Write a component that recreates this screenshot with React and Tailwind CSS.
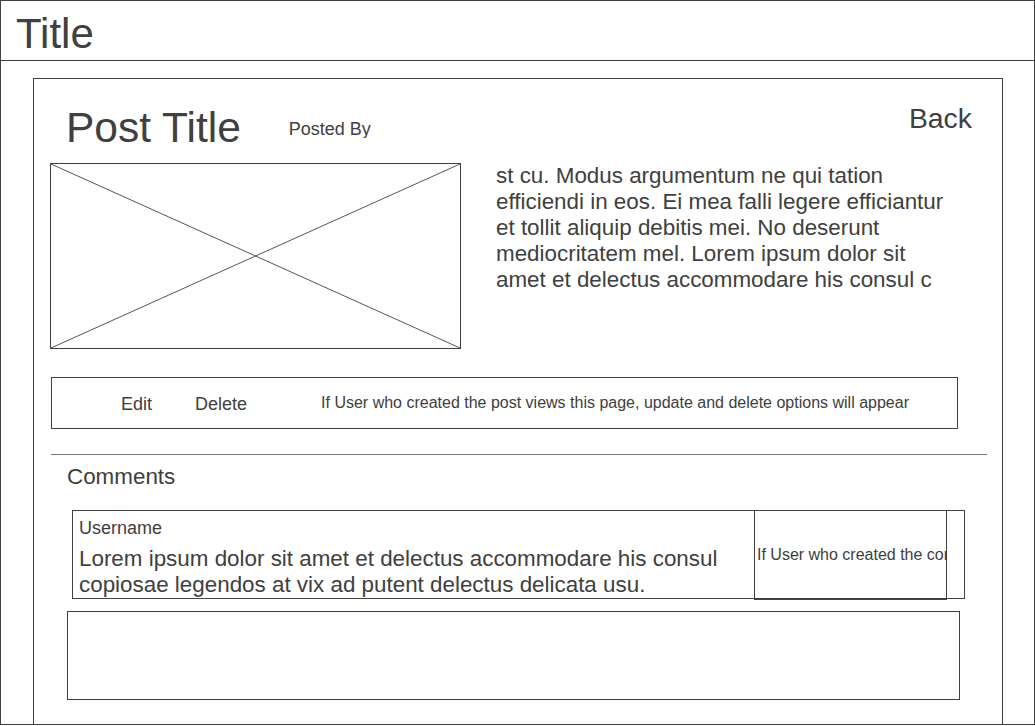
export default function App() {
    return (
        <div className="w-[1035px] h-[725px] border border-[#404040] overflow-hidden bg-white text-[#404040] font-['Liberation_Sans',Arial,sans-serif]">
            {/* Page header */}
            <div className="h-[60px] border-b border-[#404040] pl-[15px] pt-[8px]">
                <h1 className="text-[42px] leading-[1.2]">Title</h1>
            </div>

            <div className="pl-[32px] pt-[17px]">
                <div className="w-[970px] border border-[#404040] pb-[60px]">
                    {/* Post heading */}
                    <div className="flex items-start pt-[22px] pr-[30px]">
                        <h2 className="ml-[32px] mt-[1px] text-[42.5px] leading-[1.2] whitespace-nowrap">Post Title</h2>
                        <div className="ml-[48px] mt-[18px] h-[19px] overflow-hidden text-[18px] leading-[1.2] whitespace-nowrap">Posted By</div>
                        <button className="ml-auto text-[28.4px] leading-[1.2]">Back</button>
                    </div>

                    {/* Image + body */}
                    <div className="flex items-start mt-[10px] ml-[16px]">
                        <div className="relative w-[411px] h-[186px] border border-[#404040] shrink-0">
                            <svg className="absolute inset-0 w-full h-full" viewBox="0 0 409 184" preserveAspectRatio="none">
                                <line x1="0" y1="0" x2="409" y2="184" stroke="#555" strokeWidth="1" />
                                <line x1="0" y1="184" x2="409" y2="0" stroke="#555" strokeWidth="1" />
                            </svg>
                        </div>
                        <div className="ml-[35px] text-[22.4px] leading-[26px] whitespace-nowrap">
                            <div>st cu. Modus argumentum ne qui tation</div>
                            <div>efficiendi in eos. Ei mea falli legere efficiantur</div>
                            <div>et tollit aliquip debitis mei. No deserunt</div>
                            <div>mediocritatem mel. Lorem ipsum dolor sit</div>
                            <div>amet et delectus accommodare his consul c</div>
                        </div>
                    </div>

                    {/* Owner actions */}
                    <div className="mt-[28px] ml-[17px] w-[907px] h-[52px] border border-[#404040] flex items-start pt-[15px] pl-[69px] whitespace-nowrap">
                        <button className="mt-[1px] text-[18px] leading-[1.2]">Edit</button>
                        <button className="ml-[43px] mt-[1px] text-[18px] leading-[1.2]">Delete</button>
                        <span className="ml-[74px] text-[16px] leading-[1.2]">If User who created the post views this page, update and delete options will appear</span>
                    </div>

                    <div className="mt-[25px] ml-[17px] w-[936px] h-px bg-[#777]" />

                    <h3 className="mt-[9px] ml-[33px] text-[22.4px] leading-[26px]">Comments</h3>

                    {/* Comment */}
                    <div className="relative mt-[20px] ml-[38px] w-[893px] h-[89px] border border-[#404040] pl-[6px] pt-[7px] whitespace-nowrap">
                        <div className="text-[18px] leading-[1.2]">Username</div>
                        <div className="mt-[6px] text-[22.4px] leading-[26px]">
                            <div>Lorem ipsum dolor sit amet et delectus accommodare his consul</div>
                            <div>copiosae legendos at vix ad putent delectus delicata usu.</div>
                        </div>
                        <div className="absolute left-[681px] top-[-1px] w-[193px] h-[90px] border border-[#404040] border-b-2 bg-white overflow-hidden flex items-center pl-[2px]">
                            <span className="text-[16px] leading-[1.2]">If User who created the comment views this page, update and delete options will appear</span>
                        </div>
                    </div>

                    {/* New comment box */}
                    <div className="mt-[12px] ml-[33px] w-[893px] h-[89px] border border-[#404040]" />
                </div>
            </div>
        </div>
    );
}
